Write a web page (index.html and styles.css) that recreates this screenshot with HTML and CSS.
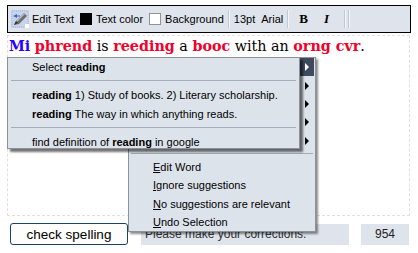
FILE: index.html
```html
<!DOCTYPE html>
<html>
<head>
<meta charset="utf-8">
<link rel="stylesheet" href="styles.css">
</head>
<body>
<div class="page">
  <div class="toolbar">
    <span class="tb-icon">
      <svg width="18" height="18" viewBox="0 0 18 18">
        <rect x="0" y="0" width="18" height="18" fill="#c9d4ea"/>
        <path d="M1 1h16v16H1z" fill="none" stroke="#9fb3dd" stroke-dasharray="1 1"/>
        <path d="M3 15 L5 11 L13 3 L16 6 L8 14 Z" fill="#6d6d6d"/>
        <path d="M5 11 L13 3 L14 4 L6 12 Z" fill="#b8b8b8"/>
        <path d="M3 15 L5 11 L7 13 Z" fill="#333"/>
        <path d="M2 6 L6 4 L6 5.5 L9 5.5 L9 6.5 L6 6.5 L6 8 Z" fill="#2d6be0"/>
        <rect x="14" y="14" width="4" height="4" fill="#fff"/>
      </svg>
    </span>
    <span class="tb-text">Edit Text</span>
    <span class="swatch swatch-black"></span>
    <span class="tb-text">Text color</span>
    <span class="swatch swatch-white"></span>
    <span class="tb-text tb-last">Background</span>
    <span class="sep"></span>
    <span class="tb-text">13pt</span>
    <span class="tb-text tb-last">Arial</span>
    <span class="sep"></span>
    <span class="tb-bold">B</span>
    <span class="tb-italic">I</span>
    <span class="sep sep-a"></span>
    <span class="sep sep-b"></span>
  </div>

  <div class="editor">
    <p class="line"><span class="w-blue">Mi</span> <span class="w-err">phrend</span> is <span class="w-err">reeding</span> a <span class="w-err">booc</span> with an <span class="w-err">orng cvr</span>.</p>
  </div>

  <div class="footer">
    <button class="check-btn">check spelling</button>
    <div class="status">Please make your corrections.</div>
    <div class="count">954</div>
  </div>

  <div class="menu-outer">
    <div class="arrow-col">
      <div class="arrow-cell active"><span class="tri"></span></div>
      <div class="arrow-cell"><span class="tri"></span></div>
      <div class="arrow-cell"><span class="tri"></span></div>
      <div class="arrow-cell"><span class="tri"></span></div>
      <div class="arrow-cell"><span class="tri"></span></div>
    </div>
    <div class="menu-sep outer-sep"></div>
    <div class="outer-items">
      <div class="item"><u>E</u>dit Word</div>
      <div class="item"><u>I</u>gnore suggestions</div>
      <div class="item"><u>N</u>o suggestions are relevant</div>
      <div class="item"><u>U</u>ndo Selection</div>
    </div>
  </div>

  <div class="menu-inner">
    <div class="item">Select <b>reading</b></div>
    <div class="menu-sep"></div>
    <div class="item"><b>reading</b> 1) Study of books. 2) Literary scholarship.</div>
    <div class="item"><b>reading</b> The way in which anything reads.</div>
    <div class="menu-sep"></div>
    <div class="item">find definition of <b>reading</b> in google</div>
  </div>
</div>
</body>
</html>
```

FILE: styles.css
```css
html, body {
  margin: 0;
  padding: 0;
  background: #ffffff;
}

.page {
  position: relative;
  width: 418px;
  height: 253px;
  padding: 5px 7px 0 7px;
  box-sizing: border-box;
  font-family: "Liberation Sans", Arial, sans-serif;
}

.toolbar {
  display: flex;
  align-items: center;
  height: 28px;
  box-sizing: border-box;
  border: 1px solid #000;
  background: #dfe4ec;
  padding: 0 0 0 3px;
  font-size: 11px;
  color: #000;
}

.tb-icon {
  display: flex;
  width: 18px;
  height: 18px;
  margin-right: 3px;
}

.tb-text {
  margin-right: 6px;
}

.tb-last {
  margin-right: 4px;
}

.swatch {
  width: 12px;
  height: 12px;
  box-sizing: border-box;
  margin-right: 4px;
}

.swatch-black {
  background: #000;
  border: 1px solid #000;
}

.swatch-white {
  background: #fff;
  border: 1px solid #8f949c;
}

.sep {
  width: 1px;
  height: 18px;
  background: #c2c8d2;
  border-right: 1px solid #f4f6f9;
  margin: 0 4px 0 0;
}

.tb-bold {
  font-family: "Liberation Serif", "Times New Roman", serif;
  font-weight: bold;
  font-size: 13px;
  margin: 0 16px 0 6px;
}

.tb-italic {
  font-family: "Liberation Serif", "Times New Roman", serif;
  font-weight: bold;
  font-style: italic;
  font-size: 13px;
  margin-right: 15px;
}

.sep-a { margin-right: 2px; }

.editor {
  height: 181px;
  margin-top: 2px;
  border: 1px dashed #e0e0e0;
  box-sizing: border-box;
  margin-right: 1px;
}

.line {
  margin: 0;
  padding: 0 0 0 1px;
  font-family: "DejaVu Serif", "Liberation Serif", serif;
  font-size: 14.3px;
  line-height: 20px;
  color: #000;
}

.w-blue {
  color: #2a00ff;
  font-weight: bold;
}

.w-err {
  color: #f0002a;
  font-weight: bold;
}

.footer {
  display: flex;
  align-items: center;
  margin-top: 7px;
  padding-left: 3px;
}

.check-btn {
  width: 118px;
  height: 22px;
  border: 1px solid #1e3f6a;
  border-radius: 3px;
  background: #fdfdfb;
  font-family: "Liberation Sans", Arial, sans-serif;
  font-size: 13.5px;
  color: #000;
  padding: 0;
  margin-right: 13px;
}

.status {
  width: 208px;
  height: 21px;
  background: #dfe4ec;
  font-size: 12px;
  line-height: 21px;
  padding-left: 4px;
  box-sizing: border-box;
  color: #333;
  margin-right: 12px;
}

.count {
  width: 48px;
  height: 21px;
  background: #dfe4ec;
  font-size: 12px;
  line-height: 21px;
  text-align: center;
  color: #222;
}

.menu-outer {
  position: absolute;
  left: 128px;
  top: 57px;
  width: 188px;
  height: 175px;
  box-sizing: border-box;
  background: #dde3eb;
  border: 1px solid #8d9299;
  box-shadow: 2px 2px 2px rgba(0,0,0,0.45);
  font-size: 11px;
  color: #000;
}

.arrow-col {
  display: grid;
  grid-template-rows: repeat(5, 18.4px);
  height: 92px;
  width: 15px;
  margin-left: auto;
  margin-right: 1px;
}

.arrow-cell {
  display: flex;
  align-items: center;
  justify-content: center;
}

.arrow-cell.active {
  background: #3e4a5e;
}

.tri {
  width: 0;
  height: 0;
  border-top: 4px solid transparent;
  border-bottom: 4px solid transparent;
  border-left: 4px solid #000;
}

.arrow-cell.active .tri {
  border-left-color: #fff;
}

.menu-sep {
  height: 1px;
  background: #a3aab8;
  margin: 4px 3px 5px 3px;
}

.outer-sep {
  margin: 3px 2px 4px 2px;
}

.outer-items {
  padding-left: 24px;
}

.item {
  height: 18.4px;
  line-height: 18.4px;
  white-space: nowrap;
}

.menu-inner {
  position: absolute;
  left: 7px;
  top: 57px;
  width: 293px;
  height: 92px;
  box-sizing: border-box;
  background: #dde3eb;
  border: 1px solid #8d9299;
  box-shadow: 3px 3px 2px rgba(0,0,0,0.55);
  font-size: 11px;
  color: #000;
}

.menu-inner .item {
  padding-left: 24px;
}
```
